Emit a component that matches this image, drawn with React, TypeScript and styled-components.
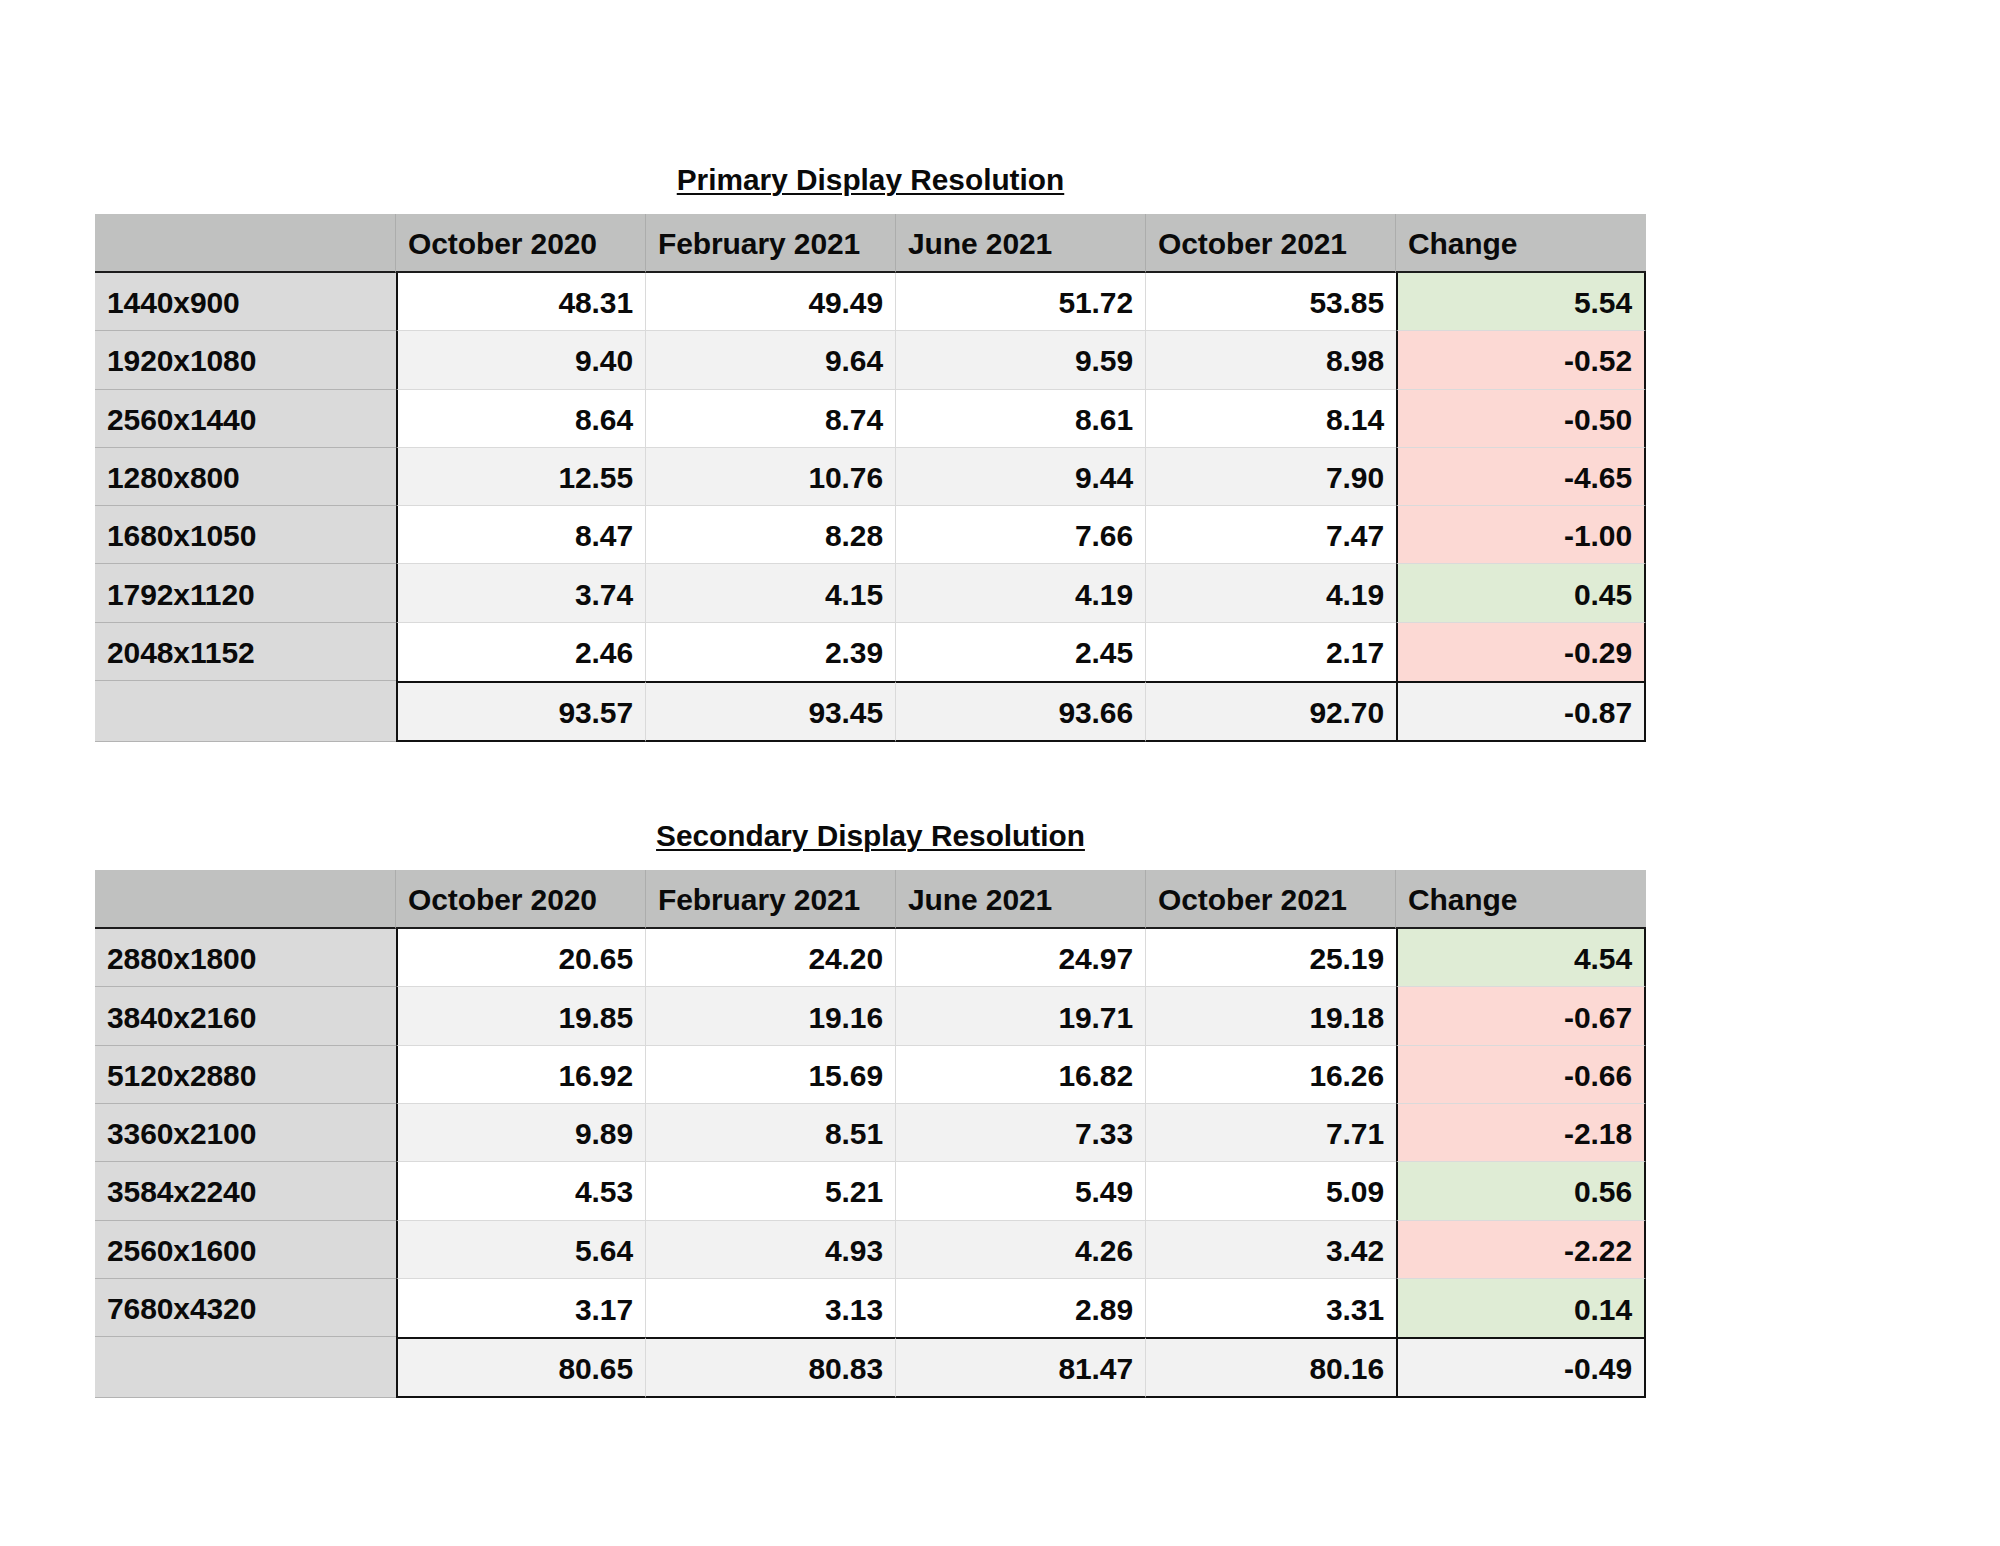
import React from "react";
import styled, { createGlobalStyle, css } from "styled-components";

const Global = createGlobalStyle`
  html, body { margin: 0; padding: 0; background: #ffffff; }
  body { font-family: "Liberation Sans", Arial, Helvetica, sans-serif; color: #0a0a0a; }
`;

const Page = styled.div`
  width: 2000px;
  min-height: 1546px;
  padding: 165px 0 0 95px;
  box-sizing: border-box;
  display: flex;
  flex-direction: column;
  gap: 79px;
`;

const Section = styled.section`
  width: 1551px;
  display: flex;
  flex-direction: column;
  align-items: center;
  gap: 20px;
`;

const Title = styled.h2`
  margin: 0;
  font-size: 29.8px;
  line-height: 29px;
  font-weight: 700;
  text-decoration: underline;
  text-decoration-thickness: 2px;
  text-underline-offset: 3px;
  color: #0a0a0a;
`;

const Grid = styled.div`
  width: 1551px;
  display: grid;
  grid-template-columns: 301px repeat(5, 250px);
  grid-template-rows: 59px repeat(7, 58.3px) 61px;
`;

type Tone = "green" | "red" | undefined;

type CellProps = {
  $kind: "head" | "label" | "num";
  $shade?: boolean;
  $tone?: Tone;
  $thickLeft?: boolean;
  $thickRight?: boolean;
  $thickTop?: boolean;
  $thickBottom?: boolean;
  $noRight?: boolean;
  $noBottom?: boolean;
};

const toneBg = (t: Tone) => (t === "green" ? "#dfecd5" : t === "red" ? "#fcd9d4" : undefined);

const Cell = styled.div<CellProps>`
  box-sizing: border-box;
  display: flex;
  align-items: center;
  padding-top: 3px;
  font-size: 30px;
  font-weight: 700;
  letter-spacing: -0.1px;
  white-space: nowrap;
  border-style: solid;
  border-width: 0;

  ${(p) =>
    p.$kind === "head" &&
    css`
      background: #c0c1c0;
      padding-left: 12px;
      border-bottom: 2px solid #1c1c1c;
      border-right: ${p.$noRight ? "0" : "1px solid #acadac"};
    `}

  ${(p) =>
    p.$kind === "label" &&
    css`
      background: #dadada;
      padding-left: 12px;
      border-bottom: 1px solid #b3b3b3;
    `}

  ${(p) =>
    p.$kind === "num" &&
    css`
      justify-content: flex-end;
      padding-right: 12px;
      background: ${toneBg(p.$tone) ?? (p.$shade ? "#f2f2f2" : "#ffffff")};
      border-bottom: ${p.$noBottom ? "0" : "1px solid #dadada"};
      border-right: ${p.$noRight ? "0" : "1px solid #dadada"};
    `}

  ${(p) => p.$thickLeft && css`border-left: 2px solid #111;`}
  ${(p) => p.$thickRight && css`border-right: 2px solid #111;`}
  ${(p) => p.$thickTop && css`border-top: 2px solid #111;`}
  ${(p) => p.$thickBottom && css`border-bottom: 2px solid #111;`}
`;

type Row = { label: string; values: string[]; change: string; tone: Tone };

type TableData = {
  title: string;
  rows: Row[];
  totals: string[];
  totalChange: string;
};

const headers = ["October 2020", "February 2021", "June 2021", "October 2021", "Change"];

const primary: TableData = {
  title: "Primary Display Resolution",
  rows: [
    { label: "1440x900", values: ["48.31", "49.49", "51.72", "53.85"], change: "5.54", tone: "green" },
    { label: "1920x1080", values: ["9.40", "9.64", "9.59", "8.98"], change: "-0.52", tone: "red" },
    { label: "2560x1440", values: ["8.64", "8.74", "8.61", "8.14"], change: "-0.50", tone: "red" },
    { label: "1280x800", values: ["12.55", "10.76", "9.44", "7.90"], change: "-4.65", tone: "red" },
    { label: "1680x1050", values: ["8.47", "8.28", "7.66", "7.47"], change: "-1.00", tone: "red" },
    { label: "1792x1120", values: ["3.74", "4.15", "4.19", "4.19"], change: "0.45", tone: "green" },
    { label: "2048x1152", values: ["2.46", "2.39", "2.45", "2.17"], change: "-0.29", tone: "red" },
  ],
  totals: ["93.57", "93.45", "93.66", "92.70"],
  totalChange: "-0.87",
};

const secondary: TableData = {
  title: "Secondary Display Resolution",
  rows: [
    { label: "2880x1800", values: ["20.65", "24.20", "24.97", "25.19"], change: "4.54", tone: "green" },
    { label: "3840x2160", values: ["19.85", "19.16", "19.71", "19.18"], change: "-0.67", tone: "red" },
    { label: "5120x2880", values: ["16.92", "15.69", "16.82", "16.26"], change: "-0.66", tone: "red" },
    { label: "3360x2100", values: ["9.89", "8.51", "7.33", "7.71"], change: "-2.18", tone: "red" },
    { label: "3584x2240", values: ["4.53", "5.21", "5.49", "5.09"], change: "0.56", tone: "green" },
    { label: "2560x1600", values: ["5.64", "4.93", "4.26", "3.42"], change: "-2.22", tone: "red" },
    { label: "7680x4320", values: ["3.17", "3.13", "2.89", "3.31"], change: "0.14", tone: "green" },
  ],
  totals: ["80.65", "80.83", "81.47", "80.16"],
  totalChange: "-0.49",
};

function DataTable({ data }: { data: TableData }) {
  const last = data.rows.length - 1;
  return (
    <Section>
      <Title>{data.title}</Title>
      <Grid>
        <Cell $kind="head" />
        {headers.map((h, i) => (
          <Cell key={h} $kind="head" $noRight={i === headers.length - 1}>
            {h}
          </Cell>
        ))}
        {data.rows.map((r, ri) => {
          const shade = ri % 2 === 1;
          const noBottom = ri === last;
          return (
            <React.Fragment key={r.label}>
              <Cell $kind="label">{r.label}</Cell>
              {r.values.map((v, ci) => (
                <Cell
                  key={ci}
                  $kind="num"
                  $shade={shade}
                  $noBottom={noBottom}
                  $thickLeft={ci === 0}
                  $noRight={ci === 3}
                >
                  {v}
                </Cell>
              ))}
              <Cell
                $kind="num"
                $tone={r.tone}
                $noBottom={noBottom}
                $thickLeft
                $thickRight
              >
                {r.change}
              </Cell>
            </React.Fragment>
          );
        })}
        <Cell $kind="label" />
        {data.totals.map((v, ci) => (
          <Cell
            key={ci}
            $kind="num"
            $shade
            $thickTop
            $thickBottom
            $thickLeft={ci === 0}
            $noRight={ci === 3}
          >
            {v}
          </Cell>
        ))}
        <Cell $kind="num" $shade $thickTop $thickBottom $thickLeft $thickRight>
          {data.totalChange}
        </Cell>
      </Grid>
    </Section>
  );
}

export default function App() {
  return (
    <>
      <Global />
      <Page>
        <DataTable data={primary} />
        <DataTable data={secondary} />
      </Page>
    </>
  );
}
